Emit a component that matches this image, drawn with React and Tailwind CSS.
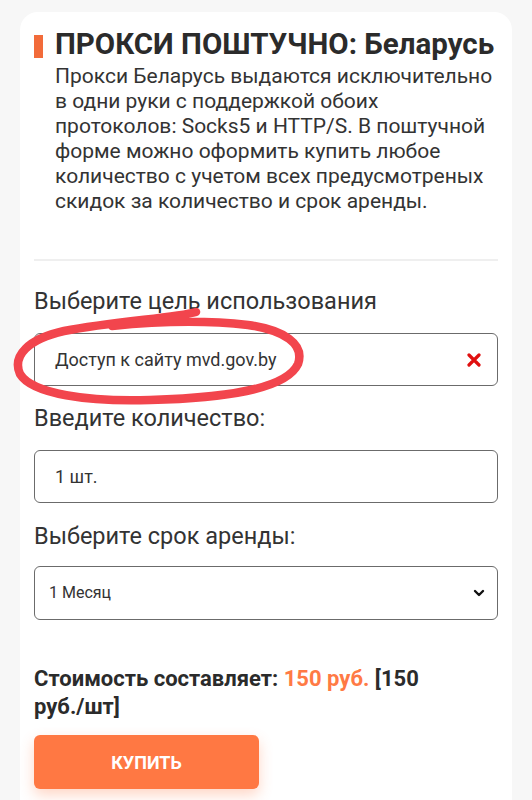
import React from 'react';

const font = { fontFamily: 'Roboto, "Noto Sans", sans-serif' };

const Field = ({ children, right }) => (
  <div className="flex items-center justify-between h-[53px] border border-[#6b6b6b] rounded-[6px] pl-5 pr-[7px] bg-white">
    {children}
    {right}
  </div>
);

const Circle = () => (
  <svg className="absolute left-0 top-0 pointer-events-none" width="532" height="800" viewBox="0 0 532 800">
    <path
      d="M196,312 C175,318 115,321 64,331 C28,339 12,356 20,374 C32,394 88,402 150,400 C222,398 286,390 298,364 C305,344 284,330 248,325 C205,320 160,321 112,326"
      fill="none"
      stroke="#f2454d"
      strokeWidth="8.5"
      strokeLinecap="round"
      strokeLinejoin="round"
    />
  </svg>
);

export default function App() {
  return (
    <div className="relative min-h-screen bg-[#f7f7f7] pt-3 px-5 text-[#333]" style={font}>
      <div className="bg-white rounded-t-[18px] px-[14px] pt-[14px] pb-3">
        <div className="flex items-center gap-3">
          <div className="w-[9px] h-[23px] bg-[#f26b3a] mt-[4px]" />
          <h1 className="text-[29.5px] leading-[36px] font-bold text-[#2b2b2b]">ПРОКСИ ПОШТУЧНО: Беларусь</h1>
        </div>
        <p className="ml-[21px] mt-[2px] text-[21px] leading-[25px] text-[#333]">
          Прокси Беларусь выдаются исключительно в одни руки с поддержкой обоих протоколов: Socks5 и HTTP/S. В поштучной форме можно оформить купить любое количество с учетом всех предусмотреных скидок за количество и срок аренды.
        </p>

        <div className="mt-[45px] h-[2px] bg-[#efefef]" />

        <div className="mt-[25px] text-[23.5px] leading-[30px]">Выберите цель использования</div>
        <div className="mt-[17px]">
          <Field
            right={
              <svg width="14" height="14" viewBox="0 0 14 14" className="mr-[9px]">
                <path d="M2,2 L12,12 M12,2 L2,12" stroke="#e01010" strokeWidth="3.2" strokeLinecap="round" />
              </svg>
            }
          >
            <span className="text-[18px]">Доступ к сайту mvd.gov.by</span>
          </Field>
        </div>

        <div className="mt-[17px] text-[23.5px] leading-[30px]">Введите количество:</div>
        <div className="mt-[17px]">
          <Field>
            <span className="text-[18px]">1 шт.</span>
          </Field>
        </div>

        <div className="mt-[18px] text-[23.5px] leading-[30px]">Выберите срок аренды:</div>
        <div className="mt-[15px]">
          <div className="flex items-center justify-between h-[54px] border border-[#6b6b6b] rounded-[6px] pl-[14px] pr-[12px]">
            <span className="text-[16px]">1 Месяц</span>
            <svg width="12" height="8" viewBox="0 0 12 8">
              <path d="M2,2 L6,6 L10,2" fill="none" stroke="#111" strokeWidth="2.4" strokeLinecap="round" strokeLinejoin="round" />
            </svg>
          </div>
        </div>

        <div className="mt-[45px] text-[22px] leading-[28px] font-bold text-[#2b2b2b] pr-16">
          Стоимость составляет: <span className="text-[#ff7a45]">150 руб.</span> [150 руб./шт]
        </div>

        <button className="mt-[14px] w-[225px] h-[54px] rounded-[6px] bg-[#ff7843] text-white text-[18px] font-bold shadow-[0_6px_14px_rgba(255,120,67,0.3)]">
          КУПИТЬ
        </button>
      </div>
      <Circle />
    </div>
  );
}
